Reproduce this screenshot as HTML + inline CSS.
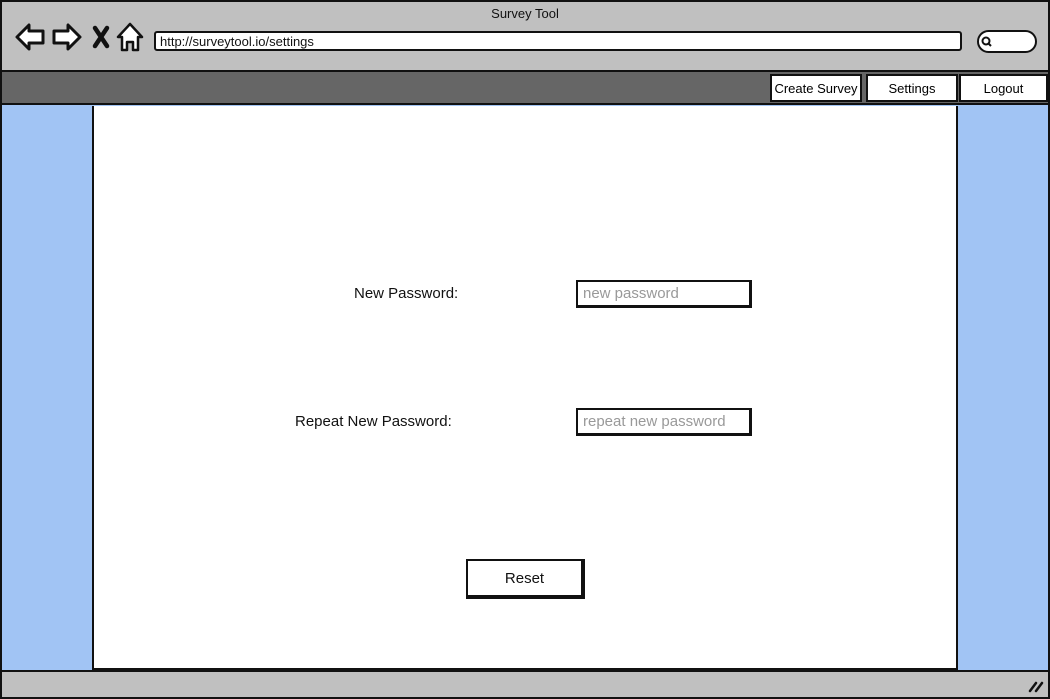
<!DOCTYPE html>
<html><head><meta charset="utf-8"><style>
*{box-sizing:border-box;margin:0;padding:0}
body{width:1050px;height:699px;overflow:hidden;font-family:"Liberation Sans",sans-serif;background:#fff;position:relative}
.a{position:absolute}
.frame{left:0;top:0;width:1050px;height:699px;border:2px solid #111;background:#a1c4f4}
.title{left:2px;top:2px;width:1046px;height:70px;background:#c0c0c0;border-bottom:2px solid #111}
.nav{left:2px;top:72px;width:1046px;height:33px;background:#666;border-bottom:2px solid #111}
.btn{top:74px;height:28px;background:#fff;border:2px solid #111;font-size:13px;display:flex;align-items:center;justify-content:center}
.panel{left:92px;top:106px;width:866px;height:564px;background:#fff;border:2px solid #111;border-top:none}
.bottom{left:2px;top:670px;width:1046px;height:27px;background:#c0c0c0;border-top:2px solid #111}
.lbl{font-size:15px;color:#111}
.inp{width:176px;height:28px;border:2px solid #111;border-right-width:3px;border-bottom-width:3px;font-size:15px;color:#999;padding:3px 5px;background:#fff}
</style></head><body>
<div class="a frame"></div>
<div class="a title"></div>
<div class="a" style="left:0;top:6px;width:1050px;text-align:center;font-size:13px;color:#111">Survey Tool</div>
<svg class="a" style="left:14px;top:22px" width="130" height="30" viewBox="0 0 130 30">
<path d="M3 15 L15 3 L15 9 L29 9 L29 21 L15 21 L15 27 Z" fill="#fff" stroke="#111" stroke-width="3" stroke-linejoin="round"/>
<path d="M66 15 L54 3 L54 9 L40 9 L40 21 L54 21 L54 27 Z" fill="#fff" stroke="#111" stroke-width="3" stroke-linejoin="round"/>
<path d="M81 6 L93 24 M93 6 L81 24" stroke="#111" stroke-width="4.5" stroke-linecap="round"/>
<path d="M116 2 L104 15 L108 15 L108 28 L113 28 L113 20 L119 20 L119 28 L124 28 L124 15 L128 15 Z" fill="#fff" stroke="#111" stroke-width="2.5" stroke-linejoin="round"/>
</svg>
<div class="a" style="left:154px;top:31px;width:808px;height:20px;background:#fff;border:2px solid #111;border-radius:3px;font-size:13px;padding:1px 4px;color:#111">http://surveytool.io/settings</div>
<div class="a" style="left:977px;top:30px;width:60px;height:23px;background:#fff;border:2px solid #111;border-radius:12px"></div>
<svg class="a" style="left:980px;top:35px" width="14" height="14"><circle cx="6" cy="6" r="3.5" fill="none" stroke="#111" stroke-width="2"/><path d="M8.5 8.5 L11 11" stroke="#111" stroke-width="2"/></svg>
<div class="a nav"></div>
<div class="a btn" style="left:770px;width:92px">Create Survey</div>
<div class="a btn" style="left:866px;width:92px">Settings</div>
<div class="a btn" style="left:959px;width:89px">Logout</div>
<div class="a panel"></div>
<div class="a lbl" style="left:354px;top:285px">New Password:</div>
<div class="a inp" style="left:576px;top:280px">new password</div>
<div class="a lbl" style="left:295px;top:413px">Repeat New Password:</div>
<div class="a inp" style="left:576px;top:408px">repeat new password</div>
<div class="a" style="left:466px;top:559px;width:119px;height:40px;background:#fff;border:2px solid #111;border-right-width:4px;border-bottom-width:4px;font-size:15px;display:flex;align-items:center;justify-content:center;color:#111">Reset</div>
<div class="a bottom"></div>
<svg class="a" style="left:1027px;top:678px" width="18" height="16"><path d="M3 13 L9 5 M9 13 L15 5" stroke="#111" stroke-width="2.5" stroke-linecap="round"/></svg>
</body></html>
